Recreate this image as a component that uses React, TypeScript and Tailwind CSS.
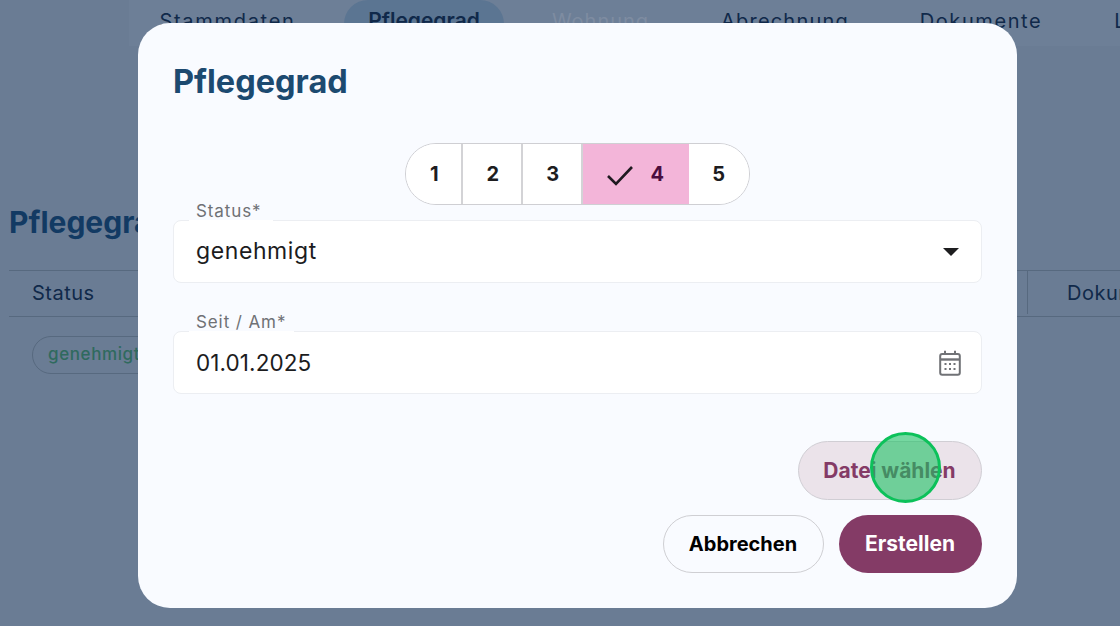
import React from "react";

const font = { fontFamily: '"Inter", "Liberation Sans", sans-serif' };

function Tab({ label, className = "" }: { label: string; className?: string }) {
  return (
    <div className={`flex h-[42px] shrink-0 items-center justify-center whitespace-nowrap rounded-t-[24px] text-[20px] ${className}`}>
      {label}
    </div>
  );
}

function Segment({ label, className = "" }: { label: string; className?: string }) {
  return (
    <div className={`flex h-full items-center justify-center bg-white text-[20px] font-bold text-[#1d1d1f] ${className}`}>
      {label}
    </div>
  );
}

function Field({ label, labelWidth, children }: { label: string; labelWidth: string; children: React.ReactNode }) {
  return (
    <div className="relative flex h-[63px] items-center justify-between rounded-[8px] border border-[#eceef2] bg-white pl-[22px] pr-[20px] text-[#1c1c1e]">
      <span className={`absolute left-[15px] top-[-20px] h-[24px] bg-[linear-gradient(to_bottom,#f9fbff_80%,#ffffff_80%)] px-[7px] text-[17px] leading-[20px] tracking-[0.9px] text-[#6f7175] ${labelWidth}`}>
        {label}
      </span>
      {children}
    </div>
  );
}

export default function App() {
  return (
    <div className="relative h-[626px] w-[1120px] overflow-hidden bg-[#6a7c94] text-[#10294a]" style={font}>
      <div className="ml-[129px] flex h-[46px] items-start bg-[#6d7f97]">
        <Tab label="Stammdaten" className="ml-[30px] w-[137px] tracking-[1.7px]" />
        <Tab label="Pflegegrad" className="ml-[48px] h-[46px] w-[160px] bg-[#5b7592] pb-[4px] text-[21px] font-semibold" />
        <Tab label="Wohnung" className="ml-[47px] w-[99px] tracking-[1px] text-[#7e8ca1]" />
        <Tab label="Abrechnung" className="ml-[71px] w-[128px] tracking-[1.2px]" />
        <Tab label="Dokumente" className="ml-[71px] w-[122px] tracking-[1.6px]" />
        <Tab label="L" className="ml-[73px] w-[10px]" />
      </div>

      <h2 className="ml-[9px] mt-[156px] text-[30px] font-bold leading-[40px] text-[#123a63]">Pflegegrad</h2>

      <div className="ml-[9px] mt-[28px] flex h-[47px] items-center border-y border-[#57697f] pb-[2px] text-[20px]">
        <span className="ml-[23px] tracking-[0.5px]">Status</span>
        <span className="ml-auto flex h-full w-[93px] items-center whitespace-nowrap border-l border-[#57697f] pl-[39px] tracking-[0.5px]">Dokumente</span>
      </div>

      <div className="ml-[32px] mt-[19px] flex h-[38px] w-[160px] items-center rounded-full border border-[#57697f] pl-[15px] text-[17px] font-medium tracking-[0.6px] text-[#2f6a5e]">
        genehmigt
      </div>

      {/* modal */}
      <div className="absolute left-[138px] top-[23px] flex h-[585px] w-[879px] flex-col rounded-[32px] bg-[#f9fbff] pl-[35px] pr-[35.5px]">
        <h1 className="mt-[39px] text-[32.5px] font-bold leading-[40px] text-[#1c4a70]">Pflegegrad</h1>

        <div className="mx-auto mt-[41px] flex h-[62px] w-[345px] overflow-hidden rounded-full border border-[#cfcfd3]">
          <Segment label="1" className="w-[57px] border-r-2 border-[#d3d3d6] pl-[2px]" />
          <Segment label="2" className="w-[60px] border-r-2 border-[#d3d3d6] pl-[2px]" />
          <Segment label="3" className="w-[60px] border-r-2 border-[#d3d3d6] pl-[2px]" />
          <div className="flex h-full w-[106px] items-center justify-center gap-[16px] bg-[#f3b5d9] pr-[1px] text-[#4a0d3e]">
            <svg width="28" height="22" viewBox="0 0 28 22" fill="none" className="mt-[2px]">
              <path d="M2 12l8 8L26 3" stroke="#1f1a20" strokeWidth="2.6" />
            </svg>
            <span className="text-[20px] font-bold">4</span>
          </div>
          <Segment label="5" className="flex-1" />
        </div>

        <div className="mt-[15px] flex flex-col gap-[48px]">
          <Field label="Status*" labelWidth="w-[84px]">
            <span className="text-[23px] tracking-[0.6px]">genehmigt</span>
            <svg width="16" height="8" viewBox="0 0 16 8" className="mr-[2px]">
              <path d="M0 0h16L8 8z" fill="#1d1d1f" />
            </svg>
          </Field>
          <Field label="Seit / Am*" labelWidth="w-[105px]">
            <span className="text-[22.5px] tracking-[0.1px]">01.01.2025</span>
            <svg width="22" height="26" viewBox="0 0 22 26" fill="none">
              <rect x="1.2" y="4" width="19.6" height="20.8" rx="2" stroke="#707276" strokeWidth="2" />
              <path d="M1 9.5h20" stroke="#707276" strokeWidth="2.4" />
              <path d="M6 0.8v4M16 0.8v4" stroke="#707276" strokeWidth="2" />
              <path d="M5.5 14h2M10 14h2M14.5 14h2M5.5 19h2M10 19h2M14.5 19h2" stroke="#707276" strokeWidth="2" />
            </svg>
          </Field>
        </div>

        <div className="mt-[47px] flex justify-end">
          <button className="flex h-[59px] w-[184px] items-center justify-center rounded-full border border-[#d0ced4] bg-[#ebe3ea] text-[21px] font-bold text-[#843b66]">
            Datei wählen
          </button>
        </div>

        <div className="mt-[15px] flex justify-end gap-[15px]">
          <button className="flex h-[58px] w-[161px] items-center justify-center rounded-full border border-[#cfcfd3] text-[20px] font-bold text-black">
            Abbrechen
          </button>
          <button className="flex h-[58px] w-[143px] items-center justify-center rounded-full bg-[#843b66] text-[21px] font-bold text-white">
            Erstellen
          </button>
        </div>
      </div>

      {/* click marker */}
      <div className="absolute left-[870px] top-[432px] h-[71px] w-[71px] rounded-full border-[3px] border-[#0cc15a] bg-[#1cc262]/60" />
    </div>
  );
}
